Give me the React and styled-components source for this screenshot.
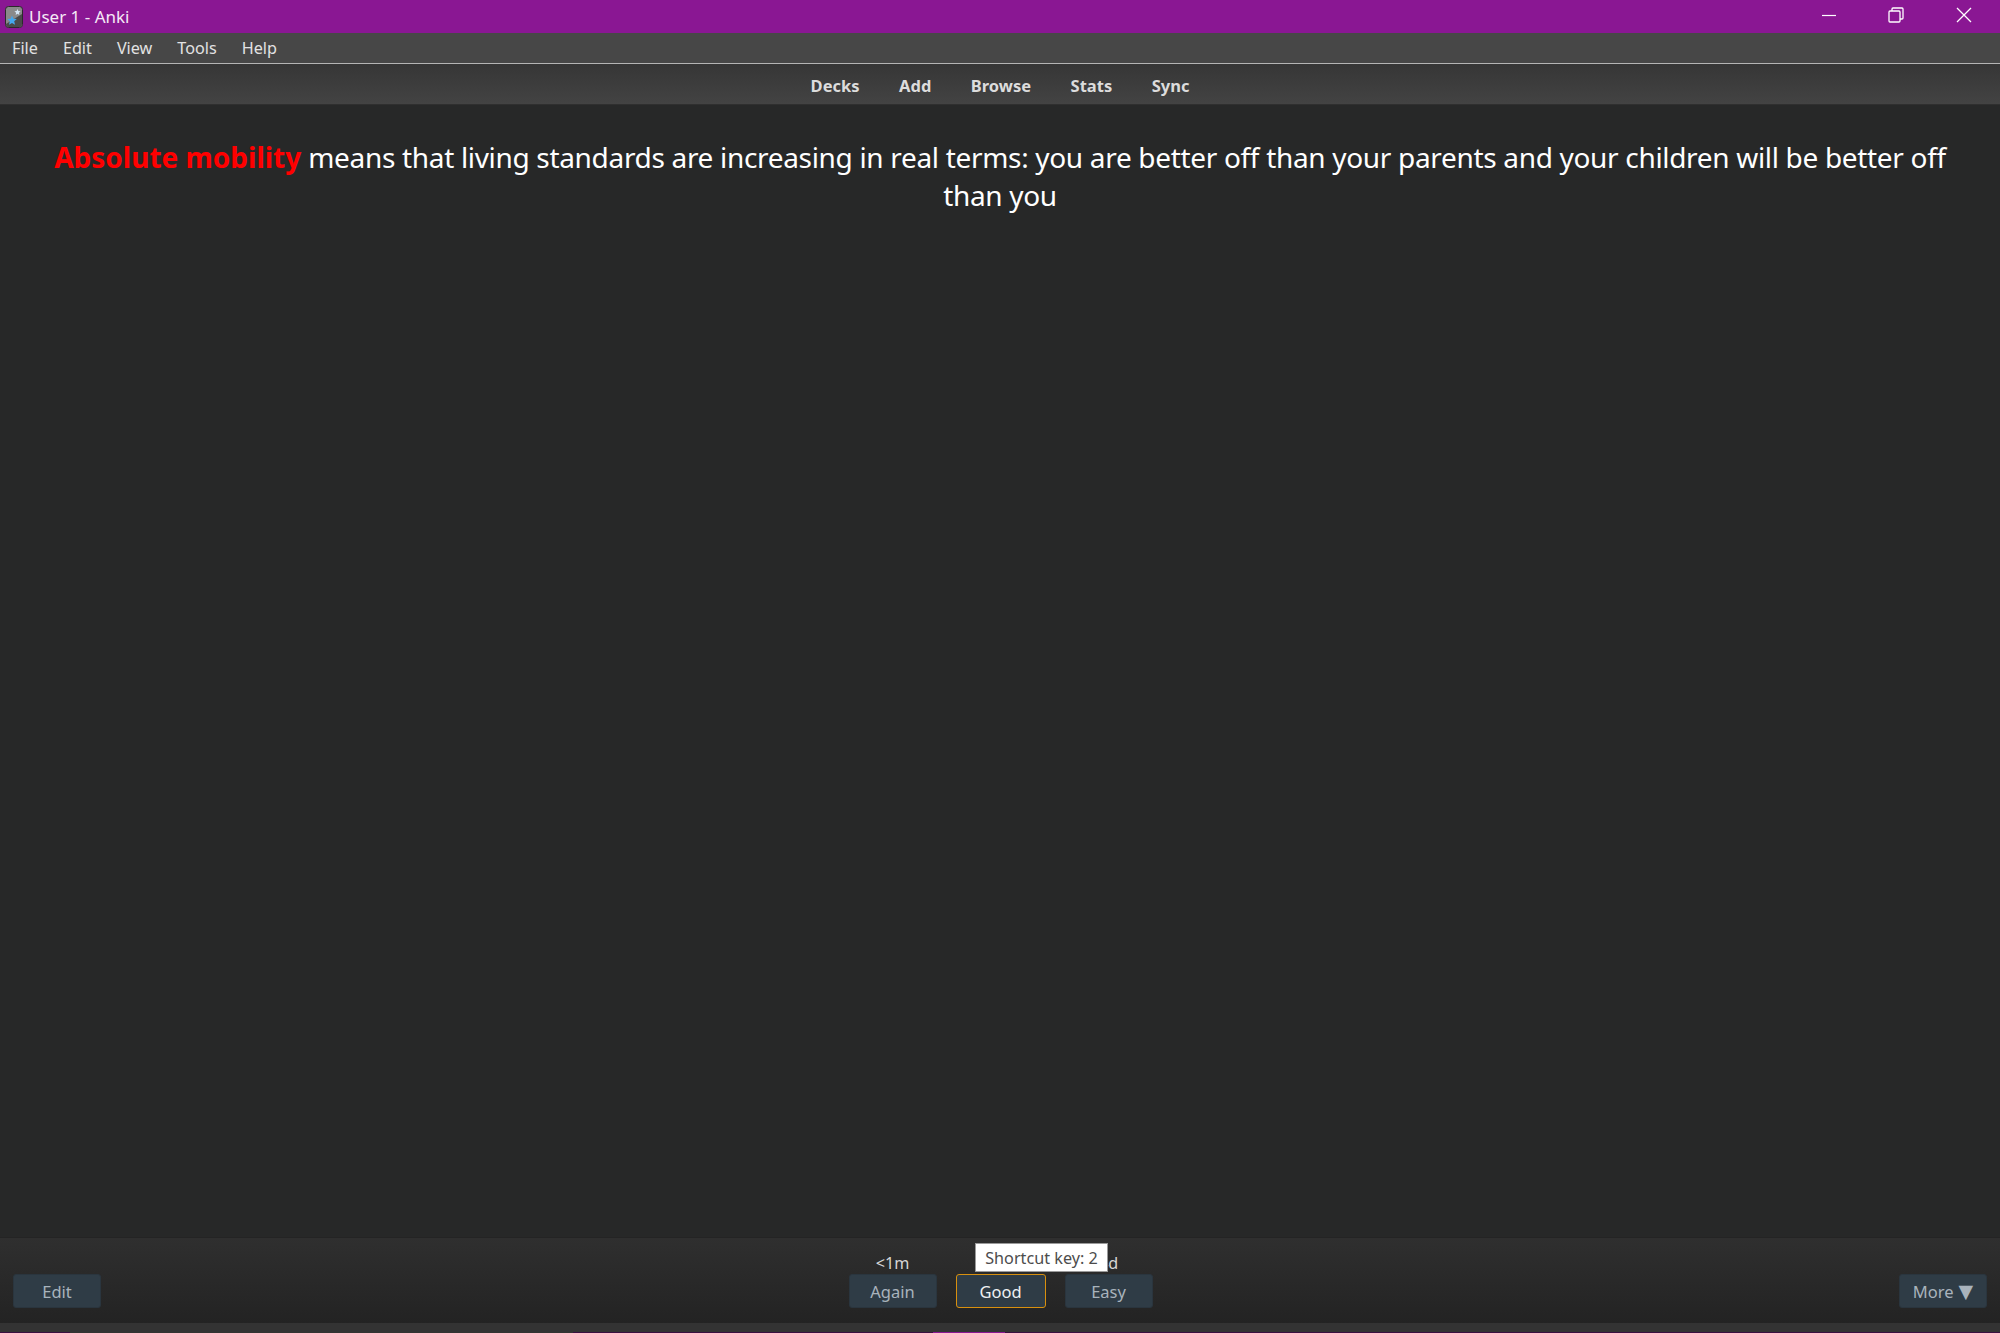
import React from "react";
import styled, { createGlobalStyle } from "styled-components";

const Global = createGlobalStyle`
  html, body { margin: 0; padding: 0; background: #272828; }
  #root { width: 2000px; height: 1333px; overflow: hidden; }
  * { box-sizing: border-box; }
`;
const Win = styled.div`
  width: 2000px; height: 1333px; display: flex; flex-direction: column;
  font-family: "Noto Sans", "Open Sans", sans-serif; background: #272828;
`;
const TitleBar = styled.header`
  height: 33px; flex: none; background: #8a1793; color: #f5e9f6; display: flex; align-items: center;
  padding-left: 5px; font-size: 17px;
`;
const TitleText = styled.span`margin-left: 6px;`;
const WinButtons = styled.div`margin-left: auto; display: flex; align-items: center; padding-right: 2px;`;
const WinBtn = styled.div`
  width: 68px; height: 33px; display: flex; align-items: center; justify-content: center; padding-bottom: 3px;
  &:first-child { padding-left: 2px; }
`;
const MenuBar = styled.nav`
  height: 31px; flex: none; background: #474747; border-bottom: 1.5px solid #b5b5b5;
  display: flex; align-items: center; padding-left: 12px; gap: 25px; color: #e2e2e2; font-size: 16.2px;
`;
const MenuItem = styled.span``;
const Toolbar = styled.nav`
  height: 41px; flex: none; background: linear-gradient(#363636, #434343);
  display: flex; justify-content: center; align-items: center; gap: 39.5px;
  color: #dcdcdc; font-size: 16.5px; font-weight: 700; padding-top: 2px; border-bottom: 1px solid #2f2f2f;
`;
const Card = styled.main`
  flex: 1; padding: 33px 50px 0; text-align: center; color: #fff; font-size: 28px; letter-spacing: -0.32px; line-height: 38px;
`;
const Strong = styled.b`color: #f00; letter-spacing: 0;`;
const Bottom = styled.footer`
  height: 86px; flex: none; position: relative; display: grid; grid-template-columns: 1fr auto 1fr; align-items: end;
  padding: 0 13px 15px; background: linear-gradient(#2f2f2f, #232323); border-top: 1px solid #242424;
`;
const Answers = styled.div`display: flex; gap: 19px; margin-left: 1px;`;
const Answer = styled.div`display: flex; flex-direction: column; align-items: center;`;
const Due = styled.span`color: #d6d6d6; font-size: 16.2px; line-height: 18px; margin-bottom: 2px;`;
const Btn = styled.div`
  width: ${p => (p.$focus ? "90px" : "88px")}; height: 34px; border-radius: 3px; display: flex; align-items: center; justify-content: center;
  background: #2f3c46; color: ${p => (p.$focus ? "#eef0f2" : "#a9b3bc")}; font-size: 16.5px;
  border: 1px solid ${p => (p.$focus ? "#d8900f" : "#2a353e")};
`;
const RightCell = styled.div`justify-self: end;`;
const Caret = styled.span`font-family: "DejaVu Sans", sans-serif; font-size: 19px; margin-left: 5px; line-height: 1;`;
const Tooltip = styled.div`
  position: absolute; left: 975px; top: 5px; width: 133px; height: 29px; background: #fff; border: 1px solid #9a9a9a;
  color: #4c4c4c; font-size: 16.2px; display: flex; align-items: center; justify-content: center; white-space: nowrap;
`;
const Strip = styled.div`
  height: 10px; flex: none; background: #333; position: relative;
  display: flex; align-items: flex-end;
`;
const TaskSeg = styled.i`
  position: absolute; bottom: 0; height: 1px; left: ${p => p.$l}px; width: ${p => p.$w}px; background: ${p => p.$c};
`;

const Logo = () => (
  <svg width="18" height="22" viewBox="0 0 18 22">
    <rect x="0.5" y="0.5" width="17" height="21" rx="3" fill="#8a8a8a" stroke="#2a2a2a"/>
    <path d="M1 18 L17 8 V18 Q17 21 15 21 H3 Q1 21 1 18Z" fill="#4a4a4a"/>
    <path d="M12.5 3l.9 2.1 2.2.2-1.7 1.5.5 2.2-1.9-1.2-1.9 1.2.5-2.2-1.7-1.5 2.2-.2z" fill="#d5e6f5"/>
    <path d="M7 9.5l1.4 3.2 3.4.3-2.6 2.3.8 3.4L7 16.9l-3 1.8.8-3.4L2.2 13l3.4-.3z" fill="#45a8ee"/>
  </svg>
);
const MinIcon = () => <svg width="16" height="3" viewBox="0 0 16 3"><path d="M1 1.5h14" stroke="#fff" strokeWidth="1.2"/></svg>;
const RestoreIcon = () => (
  <svg width="16" height="16" viewBox="0 0 16 16" fill="none" stroke="#fff" strokeWidth="1.3">
    <rect x="1" y="4" width="11" height="11" rx="1"/>
    <path d="M4 4V2a1 1 0 0 1 1-1h9a1 1 0 0 1 1 1v9a1 1 0 0 1-1 1h-2"/>
  </svg>
);
const CloseIcon = () => <svg width="16" height="16" viewBox="0 0 16 16"><path d="M1 1l14 14M15 1L1 15" stroke="#fff" strokeWidth="1.3"/></svg>;

export default function App() {
  return (
    <Win>
      <Global />
      <TitleBar>
        <Logo />
        <TitleText>User 1 - Anki</TitleText>
        <WinButtons>
          <WinBtn><MinIcon /></WinBtn>
          <WinBtn><RestoreIcon /></WinBtn>
          <WinBtn><CloseIcon /></WinBtn>
        </WinButtons>
      </TitleBar>
      <MenuBar>
        {["File", "Edit", "View", "Tools", "Help"].map(m => <MenuItem key={m}>{m}</MenuItem>)}
      </MenuBar>
      <Toolbar>
        {["Decks", "Add", "Browse", "Stats", "Sync"].map(m => <MenuItem key={m}>{m}</MenuItem>)}
      </Toolbar>
      <Card>
        <Strong>Absolute mobility</Strong> means that living standards are increasing in real terms: you are better off than your parents and your children will be better off than you
      </Card>
      <Bottom>
        <Btn>Edit</Btn>
        <Answers>
          <Answer><Due>&lt;1m</Due><Btn>Again</Btn></Answer>
          <Answer><Due>&lt;10m</Due><Btn $focus>Good</Btn></Answer>
          <Answer><Due>4d</Due><Btn>Easy</Btn></Answer>
        </Answers>
        <RightCell><Btn>More<Caret>▼</Caret></Btn></RightCell>
        <Tooltip>Shortcut key: 2</Tooltip>
      </Bottom>
      <Strip>
        <TaskSeg $l={0} $w={70} $c="#3a0f40" />
        <TaskSeg $l={573} $w={1427} $c="#3a0f40" />
        <TaskSeg $l={933} $w={72} $c="#8a1793" />
      </Strip>
    </Win>
  );
}
